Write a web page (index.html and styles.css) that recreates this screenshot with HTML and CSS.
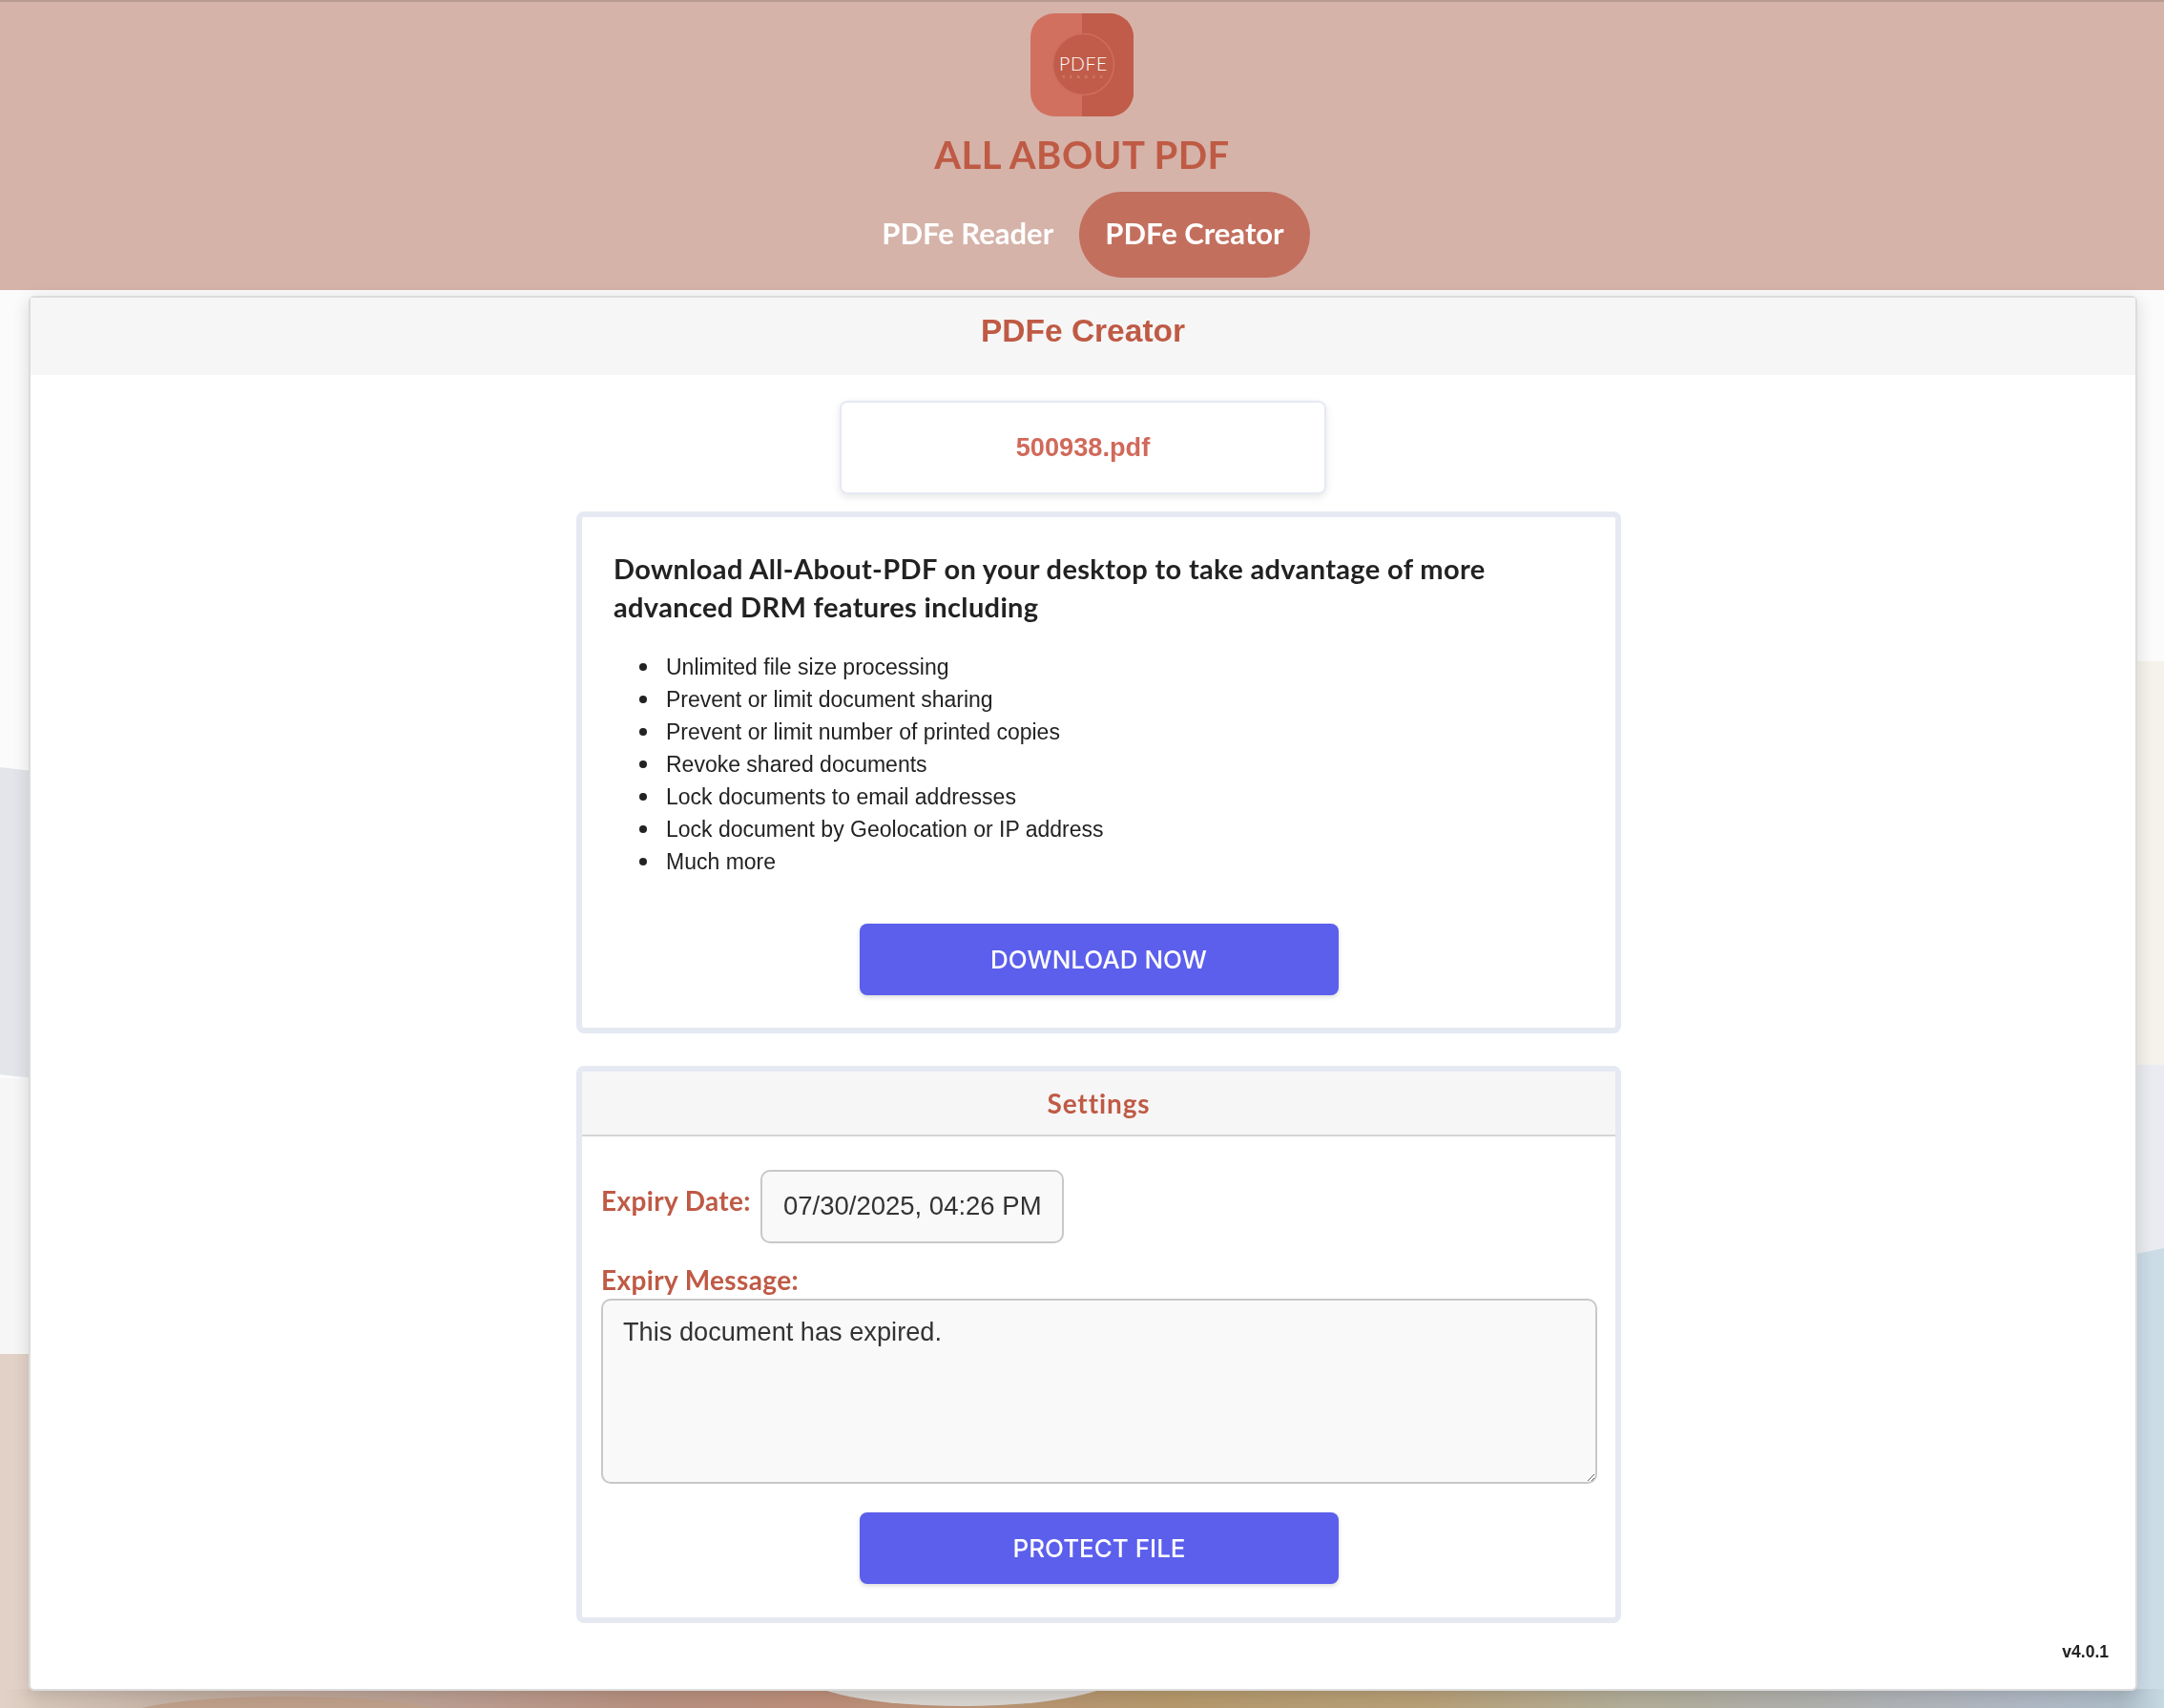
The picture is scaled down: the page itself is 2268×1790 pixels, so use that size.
FILE: index.html
```html
<!DOCTYPE html>
<html lang="en">
<head>
  <meta charset="UTF-8" />
  <meta name="viewport" content="width=device-width, initial-scale=1.0"/>
  <title>All About PDF</title>
  <link rel="stylesheet" href="styles.css">
</head>
<body>
  <svg class="backdrop" viewBox="0 0 2268 1790" preserveAspectRatio="none" aria-hidden="true">
    <defs>
      <linearGradient id="bottomWash" x1="0" y1="0" x2="1" y2="0">
        <stop offset="0" stop-color="#e3d2c7"/>
        <stop offset="0.02" stop-color="#d6c5b9"/>
        <stop offset="0.08" stop-color="#c5b3a6"/>
        <stop offset="0.2" stop-color="#bca093"/>
        <stop offset="0.3" stop-color="#b89080"/>
        <stop offset="0.38" stop-color="#bd8f7a"/>
        <stop offset="0.54" stop-color="#b69a6c"/>
        <stop offset="0.66" stop-color="#b8a078"/>
        <stop offset="0.75" stop-color="#b3ae98"/>
        <stop offset="0.84" stop-color="#b0b0ae"/>
        <stop offset="0.93" stop-color="#b0b8c4"/>
        <stop offset="0.98" stop-color="#aebdc8"/>
        <stop offset="1" stop-color="#c6d8e2"/>
      </linearGradient>
    </defs>
    <rect width="2268" height="1790" fill="#fbfbfb"/>
    <path d="M0 804 L34 808 V1130 L0 1126 Z" fill="#e3e5ea"/>
    <rect x="0" y="1130" width="34" height="290" fill="#f6f6f6"/>
    <path d="M2234 693 H2268 V1116 H2234 Z" fill="#f4f2ea"/>
    <path d="M2234 1116 H2268 V1315 H2234 Z" fill="#e9ebf0"/>
    <path d="M2234 1315 Q2250 1312 2268 1308 V1790 H2234 Z" fill="#cbdce6"/>
    <rect x="0" y="1419" width="34" height="371" fill="#e2d1c6"/>
    <rect x="0" y="1770" width="2268" height="20" fill="url(#bottomWash)"/>
    <ellipse cx="300" cy="1802" rx="175" ry="24" fill="#bfa08a"/>
    <ellipse cx="1008" cy="1755" rx="165" ry="33" fill="#d9d6d2"/>
  </svg>

  <header class="topbar">
    <svg class="logo" viewBox="0 0 108 108" aria-label="PDFe logo">
      <rect width="108" height="108" rx="25" fill="#d27060"/>
      <path d="M54 0 H83 A25 25 0 0 1 108 25 V83 A25 25 0 0 1 83 108 H54 Z" fill="#c05c49"/>
      <circle cx="55.500" cy="53.500" r="32" fill="#c05c49" stroke="#cf6d5c" stroke-width="1.500"/>
      <text x="55.500" y="60" text-anchor="middle" font-family="Lato, sans-serif" font-size="19.500" font-weight="300" letter-spacing="0.600" fill="#fff">PDFE</text>
      <text x="57" y="68" text-anchor="middle" font-family="Lato, sans-serif" font-size="4.500" font-weight="300" letter-spacing="5" fill="#efc0b6">READER</text>
    </svg>
    <h1 class="brand">ALL ABOUT PDF</h1>
    <nav class="tabs">
      <a class="tab">PDFe Reader</a>
      <a class="tab active">PDFe Creator</a>
    </nav>
  </header>

  <main class="card">
    <h2 class="card-title">PDFe Creator</h2>
    <div class="card-body">
      <div class="file-box">500938.pdf</div>

      <section class="panel promo">
        <h3>Download All-About-PDF on your desktop to take advantage of more advanced DRM features including</h3>
        <ul>
          <li>Unlimited file size processing</li>
          <li>Prevent or limit document sharing</li>
          <li>Prevent or limit number of printed copies</li>
          <li>Revoke shared documents</li>
          <li>Lock documents to email addresses</li>
          <li>Lock document by Geolocation or IP address</li>
          <li>Much more</li>
        </ul>
        <button class="action">DOWNLOAD NOW</button>
      </section>

      <section class="panel settings">
        <div class="settings-head">Settings</div>
        <div class="settings-body">
          <div class="date-row">
            <label for="expiryDate">Expiry Date:</label>
            <input type="text" id="expiryDate" value="07/30/2025, 04:26 PM" />
          </div>
          <label for="expiryMsg">Expiry Message:</label>
          <textarea id="expiryMsg">This document has expired.</textarea>
          <button class="action">PROTECT FILE</button>
        </div>
      </section>
    </div>
    <div class="version">v4.0.1</div>
  </main>
</body>
</html>
```

FILE: styles.css
```css
* {
  box-sizing: border-box;
}

body {
  margin: 0;
  height: 1790px;
  overflow: hidden;
  background: #fff;
  font-family: 'Liberation Sans', Arial, sans-serif;
  color: #222;
}

.backdrop {
  position: fixed;
  top: 0;
  left: 0;
  width: 100%;
  height: 100%;
  z-index: -1;
}

.topbar {
  height: 304px;
  padding-top: 14px;
  background: #d5b3a9;
  border-top: 2px solid #b89a91;
  display: flex;
  flex-direction: column;
  align-items: center;
}

.logo {
  width: 108px;
  height: 108px;
  margin-top: -2px;
}

.brand {
  margin: 15px 0 0;
  font-family: Lato, sans-serif;
  font-size: 40px;
  line-height: 50px;
  font-weight: 700;
  letter-spacing: 0.5px;
  color: #bf5a45;
}

.tabs {
  display: flex;
  align-items: center;
  margin-top: 14px;
  margin-left: 2px;
}

.tab {
  height: 90px;
  padding: 0 27px 4px;
  border-radius: 45px;
  display: flex;
  align-items: center;
  font-family: Lato, sans-serif;
  font-size: 31px;
  font-weight: 700;
  color: #fff;
}

.tab.active {
  background: #c36f5e;
}

.card {
  height: 1462px;
  margin: 6px 28px 0 30px;
  background: #fff;
  border: 2px solid #dcdcdc;
  border-radius: 6px;
  box-shadow: 0 4px 18px rgba(0, 0, 0, 0.14);
  display: flex;
  flex-direction: column;
}

.card-title {
  margin: 0;
  height: 82px;
  background: #f6f6f6;
  font-size: 33.500px;
  line-height: 70px;
  font-weight: 700;
  text-align: center;
  color: #bf5a45;
}

.card-body {
  flex: 1;
  padding-top: 27px;
  display: flex;
  flex-direction: column;
}

.file-box {
  width: 510px;
  height: 98px;
  margin: 0 auto;
  padding-top: 1px;
  border: 2px solid #e5e9f2;
  border-radius: 8px;
  box-shadow: 0 3px 8px rgba(0, 0, 0, 0.1);
  display: flex;
  align-items: center;
  justify-content: center;
  font-size: 27.200px;
  font-weight: 700;
  color: #d1695a;
}

.panel {
  width: 1095px;
  margin-left: 572px;
  border: 6px solid #e5e9f2;
  border-radius: 8px;
  background: #fff;
}

.promo {
  height: 547px;
  margin-top: 18px;
  padding: 34px 33px 0;
  display: flex;
  flex-direction: column;
}

.promo h3 {
  margin: 0;
  font-family: Lato, sans-serif;
  font-size: 29px;
  line-height: 40px;
  font-weight: 700;
  letter-spacing: 0.350px;
  color: #222;
}

.promo ul {
  margin: 26px 0 0;
  padding: 0 0 0 27px;
  list-style: none;
  font-size: 23px;
  line-height: 34px;
}

.promo li {
  display: flex;
  align-items: center;
}

.promo li::before {
  content: "";
  width: 8px;
  height: 8px;
  margin-right: 20px;
  border-radius: 50%;
  background: #222;
}

.action {
  display: block;
  width: 502px;
  height: 75px;
  margin: 0 auto;
  border: none;
  border-radius: 8px;
  background: #5b5fec;
  box-shadow: 0 2px 5px rgba(0, 0, 0, 0.15);
  font-family: Inter, sans-serif;
  font-size: 26px;
  font-weight: 500;
  color: #fff;
}

.promo .action {
  margin-top: 48px;
}

.settings {
  height: 584px;
  margin-top: 34px;
}

.settings-head {
  height: 68px;
  background: #f6f6f6;
  border-bottom: 2px solid #d5d5d5;
  font-family: Lato, sans-serif;
  font-size: 28px;
  line-height: 66px;
  font-weight: 700;
  letter-spacing: 0.900px;
  text-align: center;
  color: #bf5a45;
}

.settings-body {
  padding: 35px 18px 0 20px;
}

.settings-body label {
  font-family: Lato, sans-serif;
  font-size: 28px;
  font-weight: 700;
  line-height: 34px;
  letter-spacing: 0.370px;
  color: #bf5a45;
}

.date-row {
  display: flex;
  align-items: flex-start;
  gap: 10px;
  margin-bottom: 21px;
}

.date-row label {
  margin-top: 15px;
}

.date-row input {
  width: 318px;
  height: 77px;
  padding: 0 22px;
  border: 2px solid #c8c8c8;
  border-radius: 10px;
  background: #f9f9f9;
  font-family: 'Liberation Sans', Arial, sans-serif;
  font-size: 27.500px;
  color: #333;
}

.settings-body textarea {
  display: block;
  width: 1044px;
  height: 194px;
  margin: 3px 0 30px;
  padding: 17px 21px;
  border: 2px solid #c8c8c8;
  border-radius: 10px;
  background: #f9f9f9;
  font-family: 'Liberation Sans', Arial, sans-serif;
  font-size: 27.200px;
  line-height: 32px;
  color: #333;
}

.settings .action {
  margin-left: 271px;
}

.version {
  height: 70px;
  padding: 20px 28px 0 0;
  text-align: right;
  font-size: 17.500px;
  font-weight: 700;
  color: #222;
}
```
